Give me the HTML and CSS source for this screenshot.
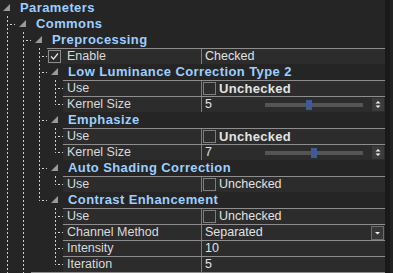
FILE: index.html
```html
<!DOCTYPE html>
<html>
<head>
<meta charset="utf-8">
<link rel="stylesheet" href="styles.css">
</head>
<body>
<div class="panel">
  <div class="tree">
    <div class="node">
      <div class="head"><span class="tog"></span><span class="title">Parameters</span></div>
      <div class="node child">
        <div class="head"><span class="tog"></span><span class="title">Commons</span></div>
        <div class="node child">
          <div class="head"><span class="tog"></span><span class="title">Preprocessing</span></div>

          <div class="node child leaf">
            <div class="row">
              <div class="name"><span class="cb on"><svg width="11" height="11" viewBox="0 0 11 11"><polyline points="2,5.5 4.5,8 9,2.5" fill="none" stroke="#e6e6e6" stroke-width="1.2"/></svg></span>Enable</div>
              <div class="val">Checked</div>
            </div>
          </div>

          <div class="node child">
            <div class="head"><span class="tog"></span><span class="title">Low Luminance Correction Type 2</span></div>
            <div class="node child leaf">
              <div class="row">
                <div class="name">Use</div>
                <div class="val cbv"><span class="cb"></span><span class="strong">Unchecked</span></div>
              </div>
            </div>
            <div class="node child leaf last">
              <div class="row">
                <div class="name">Kernel Size</div>
                <div class="val ctl"><span class="num">5</span><span class="track"><span class="thumb" style="left:41px"></span></span><span class="btn"><svg width="12" height="13" viewBox="0 0 12 13"><polygon points="3.5,5.5 6,3 8.5,5.5" fill="#f0f0f0"/><polygon points="3.5,7.5 6,10 8.5,7.5" fill="#f0f0f0"/></svg></span></div>
              </div>
            </div>
          </div>

          <div class="node child">
            <div class="head"><span class="tog"></span><span class="title">Emphasize</span></div>
            <div class="node child leaf">
              <div class="row">
                <div class="name">Use</div>
                <div class="val cbv"><span class="cb"></span><span class="strong">Unchecked</span></div>
              </div>
            </div>
            <div class="node child leaf last">
              <div class="row">
                <div class="name">Kernel Size</div>
                <div class="val ctl"><span class="num">7</span><span class="track"><span class="thumb" style="left:46px"></span></span><span class="btn"><svg width="12" height="13" viewBox="0 0 12 13"><polygon points="3.5,5.5 6,3 8.5,5.5" fill="#f0f0f0"/><polygon points="3.5,7.5 6,10 8.5,7.5" fill="#f0f0f0"/></svg></span></div>
              </div>
            </div>
          </div>

          <div class="node child">
            <div class="head"><span class="tog"></span><span class="title">Auto Shading Correction</span></div>
            <div class="node child leaf last">
              <div class="row">
                <div class="name">Use</div>
                <div class="val cbv"><span class="cb"></span>Unchecked</div>
              </div>
            </div>
          </div>

          <div class="node child last">
            <div class="head"><span class="tog"></span><span class="title">Contrast Enhancement</span></div>
            <div class="node child leaf">
              <div class="row">
                <div class="name">Use</div>
                <div class="val cbv"><span class="cb"></span>Unchecked</div>
              </div>
            </div>
            <div class="node child leaf">
              <div class="row">
                <div class="name">Channel Method</div>
                <div class="val ctl"><span class="num">Separated</span><span class="btn drop"><svg width="11" height="12" viewBox="0 0 11 12"><polygon points="3,5 8,5 5.5,7.5" fill="#f0f0f0"/></svg></span></div>
              </div>
            </div>
            <div class="node child leaf">
              <div class="row">
                <div class="name">Intensity</div>
                <div class="val">10</div>
              </div>
            </div>
            <div class="node child leaf last">
              <div class="row">
                <div class="name">Iteration</div>
                <div class="val">5</div>
              </div>
            </div>
          </div>
        </div>

        <div class="node child leaf">
          <div class="row">
            <div class="name"></div>
            <div class="val"></div>
          </div>
        </div>
        <div class="node child leaf">
          <div class="row">
            <div class="name"></div>
            <div class="val"></div>
          </div>
        </div>
      </div>
      <div class="node child">
        <div class="head"></div>
      </div>
    </div>
  </div>
  <div class="scroll"></div>
</div>
</body>
</html>
```

FILE: styles.css
```css
html, body {
  margin: 0;
  padding: 0;
  background: #252525;
  overflow: hidden;
}

body {
  font-family: "Liberation Sans", Arial, sans-serif;
  font-size: 12.5px;
  color: #dadada;
}

.panel {
  display: flex;
  height: 273px;
  overflow: hidden;
}

.tree {
  flex: 1;
  min-width: 0;
}

.scroll {
  width: 8px;
  flex: none;
  background: linear-gradient(to right, #1a1a1a 0 5px, #222222 5px);
}

/* tree guide lines */
.child {
  padding-left: 16px;
  background-image:
    repeating-linear-gradient(to bottom, #cfcfcf 0 2px, transparent 2px 4px),
    repeating-linear-gradient(to right, #cfcfcf 0 2px, transparent 2px 4px);
  background-size: 1px 100%, 5px 1px;
  background-position: 7px 0, 10px 8px;
  background-repeat: no-repeat;
}

.child.last {
  background-size: 1px 9px, 5px 1px;
}

.child.leaf {
  padding-left: 15px;
}

/* category header */
.head {
  display: flex;
  align-items: flex-start;
  height: 16px;
  line-height: 16px;
  white-space: nowrap;
}

.tog {
  flex: none;
  width: 7px;
  height: 7px;
  margin: 4px 10px 0 3px;
  background: #9a9a9a;
  clip-path: polygon(100% 0, 100% 100%, 0 100%);
}

.title {
  font-weight: bold;
  font-size: 13px;
  letter-spacing: 0.4px;
  color: #9ccfff;
}

/* property rows */
.row {
  display: flex;
  height: 16px;
  box-sizing: border-box;
  border-top: 1px solid #8e8e8e;
  background: #2c2c2c;
  line-height: 15px;
  white-space: nowrap;
}

.name {
  flex: 1;
  min-width: 0;
  display: flex;
  align-items: center;
  padding-left: 4px;
  overflow: hidden;
}

.val {
  width: 184px;
  flex: none;
  box-sizing: border-box;
  border-left: 1px solid #7c7c7c;
  padding-left: 3px;
  display: flex;
  align-items: center;
  color: #e2e2e2;
}

.val.cbv {
  padding-left: 1px;
}

.val.ctl {
  padding-right: 1px;
}

.strong {
  font-weight: bold;
  font-size: 13px;
  letter-spacing: 0.3px;
}

.cb {
  flex: none;
  width: 13px;
  height: 13px;
  box-sizing: border-box;
  border: 1px solid #7e7e7e;
  margin-right: 3px;
  display: flex;
  align-items: center;
  justify-content: center;
}

.cb.on {
  margin-left: -3px;
  margin-right: 6px;
  border-color: #8c8c8c;
}

.num {
  flex: 1;
}

.track {
  position: relative;
  width: 98px;
  height: 4px;
  margin-right: 9px;
  background: #555555;
  flex: none;
}

.thumb {
  position: absolute;
  top: -3px;
  width: 6px;
  height: 10px;
  background: #3d5b95;
}

.btn {
  flex: none;
  width: 12px;
  height: 13px;
  background: #3c3c3c;
  display: flex;
  align-items: center;
  justify-content: center;
}

.btn.drop {
  width: 13px;
  height: 14px;
  box-sizing: border-box;
  border: 1px solid #6c6c6c;
  background: #383838;
}
```
